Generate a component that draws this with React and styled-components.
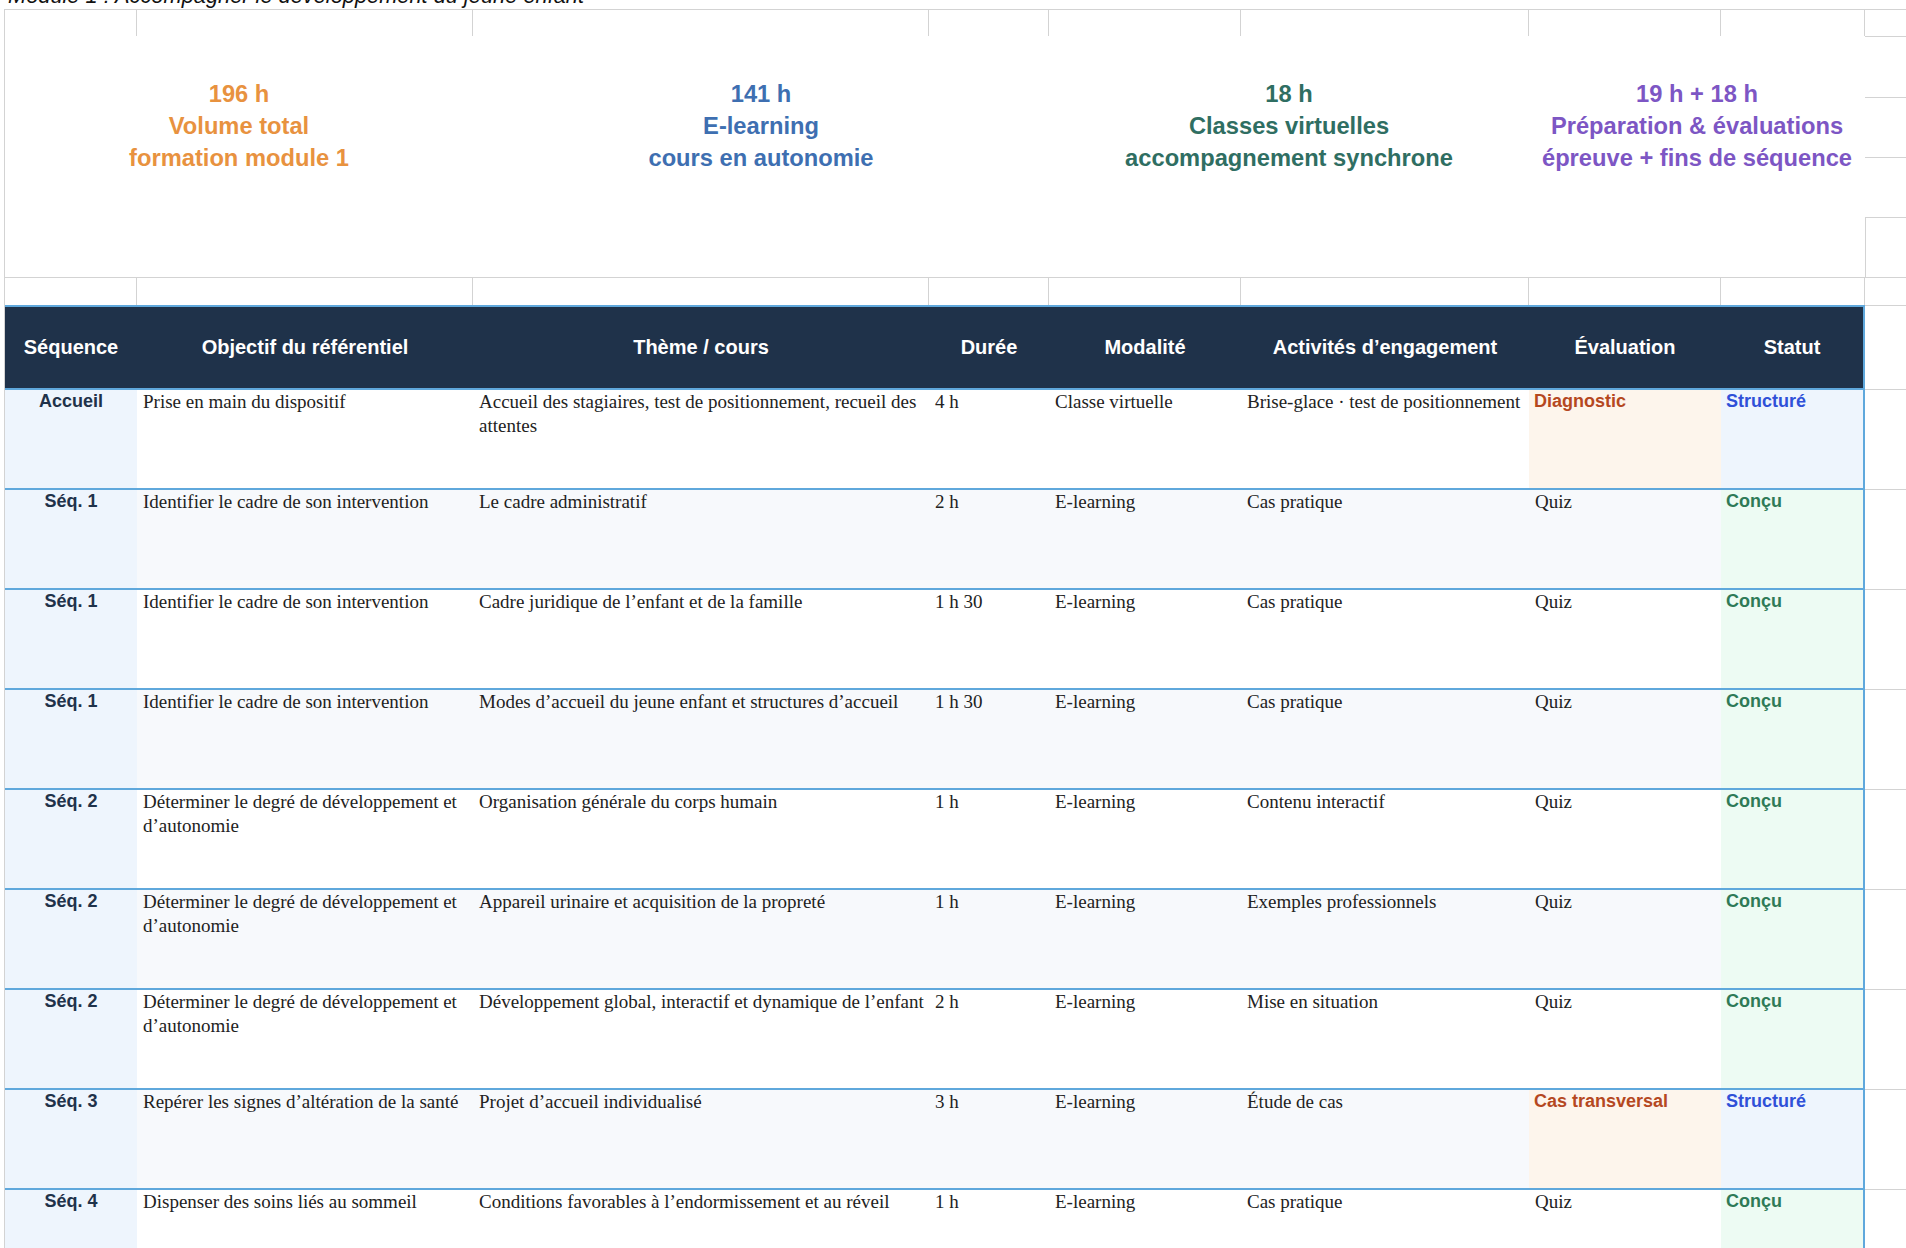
import React from "react";
import styled, { createGlobalStyle } from "styled-components";

const GlobalStyle = createGlobalStyle`
  html, body {
    margin: 0;
    padding: 0;
    background: #fff;
  }
  body {
    overflow: hidden;
  }
`;

const COLS = "132px 336px 456px 120px 192px 288px 192px 144px 1fr";
const GRID = "#d3d3d3";
const LINE = "#5fa8dc";
const NAVY = "#1f324a";

const tones = {
  orange: { bg: "#fdf5ec", fg: "#b5481f" },
  blue: { bg: "#eef5fd", fg: "#2f50d8" },
  green: { bg: "#edfbf3", fg: "#2f7a57" },
};

const Page = styled.div`
  width: 1906px;
  height: 1248px;
  overflow: hidden;
  padding-left: 4px;
  box-sizing: border-box;
  font-family: "Liberation Sans", Arial, sans-serif;
`;

const Title = styled.div`
  margin: -17px 0 0 4px;
  height: 26px;
  line-height: 26px;
  font-size: 21.8px;
  font-style: italic;
  color: #111;
  white-space: nowrap;
`;

const Sheet = styled.div`
  border-left: 1px solid ${GRID};
  border-top: 1px solid ${GRID};
`;

const StubRow = styled.div`
  display: grid;
  grid-template-columns: ${COLS};
  height: ${(p) => p.$h}px;
  box-sizing: border-box;
  border-top: ${(p) => (p.$lined ? `1px solid ${GRID}` : "none")};
`;

const Stub = styled.div`
  border-right: 1px solid ${GRID};
  box-sizing: border-box;
  &:last-child {
    border-right: none;
  }
`;

const SummaryBand = styled.div`
  display: grid;
  grid-template-columns: 468px 576px 480px 336px 1fr;
  height: 241px;
`;

const SummaryCell = styled.div`
  padding-top: 42px;
  text-align: center;
  font-size: 23.7px;
  font-weight: 700;
  line-height: 32px;
  color: ${(p) => p.$color};
`;

const FillerStack = styled.div`
  display: grid;
  grid-template-rows: 61px 60px 60px 60px;
`;

const FillerSlot = styled.div`
  border-top: 1px solid ${GRID};
  border-left: ${(p) => (p.$edge ? `1px solid ${GRID}` : "none")};
`;

const HeaderRow = styled.div`
  display: grid;
  grid-template-columns: ${COLS};
  height: 85px;
`;

const HeadCell = styled.div`
  display: flex;
  align-items: center;
  justify-content: center;
  background: ${NAVY};
  color: #fff;
  font-size: 20px;
  font-weight: 700;
  border-top: 2px solid ${LINE};
  border-bottom: 2px solid ${LINE};
  border-right: ${(p) => (p.$last ? `2px solid ${LINE}` : "none")};
  box-sizing: border-box;
  white-space: nowrap;
`;

const GridFiller = styled.div`
  border-top: ${(p) => (p.$top ? `1px solid ${GRID}` : "none")};
  border-bottom: 1px solid ${GRID};
  box-sizing: border-box;
`;

const DataRow = styled.div`
  display: grid;
  grid-template-columns: ${COLS};
  height: 100px;
`;

const Cell = styled.div`
  box-sizing: border-box;
  padding: 0 0 0 6px;
  background: ${(p) => p.$bg};
  border-bottom: 2px solid ${LINE};
  border-right: ${(p) => (p.$last ? `2px solid ${LINE}` : "none")};
  font-family: "Liberation Serif", "Times New Roman", serif;
  font-size: 19px;
  line-height: 24px;
  color: #222;
`;

const SeqCell = styled(Cell)`
  padding: 0;
  text-align: center;
  font-family: "Liberation Sans", Arial, sans-serif;
  font-weight: 700;
  font-size: 18px;
  line-height: 23px;
  color: ${NAVY};
`;

const TagCell = styled(Cell)`
  padding-left: 5px;
  font-family: "Liberation Sans", Arial, sans-serif;
  font-weight: 700;
  font-size: 18px;
  line-height: 23px;
  color: ${(p) => p.$fg};
`;

const summary = [
  { color: "#e8923f", lines: ["196 h", "Volume total", "formation module 1"] },
  { color: "#3e6fb1", lines: ["141 h", "E-learning", "cours en autonomie"] },
  { color: "#2f6e62", lines: ["18 h", "Classes virtuelles", "accompagnement synchrone"] },
  { color: "#7d56c4", lines: ["19 h + 18 h", "Préparation & évaluations", "épreuve + fins de séquence"] },
];

const headers = [
  "Séquence",
  "Objectif du référentiel",
  "Thème / cours",
  "Durée",
  "Modalité",
  "Activités d’engagement",
  "Évaluation",
  "Statut",
];

const OBJ_CADRE = "Identifier le cadre de son intervention";
const OBJ_DEV = "Déterminer le degré de développement et d’autonomie";

const rows = [
  ["Accueil", "Prise en main du dispositif", "Accueil des stagiaires, test de positionnement, recueil des attentes", "4 h", "Classe virtuelle", "Brise-glace · test de positionnement", "Diagnostic", "Structuré"],
  ["Séq. 1", OBJ_CADRE, "Le cadre administratif", "2 h", "E-learning", "Cas pratique", "Quiz", "Conçu"],
  ["Séq. 1", OBJ_CADRE, "Cadre juridique de l’enfant et de la famille", "1 h 30", "E-learning", "Cas pratique", "Quiz", "Conçu"],
  ["Séq. 1", OBJ_CADRE, "Modes d’accueil du jeune enfant et structures d’accueil", "1 h 30", "E-learning", "Cas pratique", "Quiz", "Conçu"],
  ["Séq. 2", OBJ_DEV, "Organisation générale du corps humain", "1 h", "E-learning", "Contenu interactif", "Quiz", "Conçu"],
  ["Séq. 2", OBJ_DEV, "Appareil urinaire et acquisition de la propreté", "1 h", "E-learning", "Exemples professionnels", "Quiz", "Conçu"],
  ["Séq. 2", OBJ_DEV, "Développement global, interactif et dynamique de l’enfant", "2 h", "E-learning", "Mise en situation", "Quiz", "Conçu"],
  ["Séq. 3", "Repérer les signes d’altération de la santé", "Projet d’accueil individualisé", "3 h", "E-learning", "Étude de cas", "Cas transversal", "Structuré"],
  ["Séq. 4", "Dispenser des soins liés au sommeil", "Conditions favorables à l’endormissement et au réveil", "1 h", "E-learning", "Cas pratique", "Quiz", "Conçu"],
];

const Stubs = ({ h, lined }) => (
  <StubRow $h={h} $lined={lined}>
    {Array.from({ length: 9 }).map((_, i) => (
      <Stub key={i} />
    ))}
  </StubRow>
);

const Row = ({ data, index }) => {
  const [seq, obj, theme, dur, mode, act, evalText, status] = data;
  const bg = index % 2 === 1 ? "#f7f9fc" : "#ffffff";
  const evalTone = evalText === "Quiz" ? null : tones.orange;
  const statusTone = status === "Conçu" ? tones.green : tones.blue;

  return (
    <DataRow>
      <SeqCell $bg="#eef5fd">{seq}</SeqCell>
      <Cell $bg={bg}>{obj}</Cell>
      <Cell $bg={bg}>{theme}</Cell>
      <Cell $bg={bg}>{dur}</Cell>
      <Cell $bg={bg}>{mode}</Cell>
      <Cell $bg={bg}>{act}</Cell>
      {evalTone ? (
        <TagCell $bg={evalTone.bg} $fg={evalTone.fg}>
          {evalText}
        </TagCell>
      ) : (
        <Cell $bg={bg}>{evalText}</Cell>
      )}
      <TagCell $bg={statusTone.bg} $fg={statusTone.fg} $last>
        {status}
      </TagCell>
      <GridFiller />
    </DataRow>
  );
};

const App = () => {
  return (
    <Page>
      <GlobalStyle />
      <Title>Module 1 : Accompagner le développement du jeune enfant</Title>
      <Sheet>
        <Stubs h={26} />
        <SummaryBand>
          {summary.map((s) => (
            <SummaryCell key={s.lines[0]} $color={s.color}>
              {s.lines.map((l) => (
                <div key={l}>{l}</div>
              ))}
            </SummaryCell>
          ))}
          <FillerStack>
            <FillerSlot />
            <FillerSlot />
            <FillerSlot />
            <FillerSlot $edge />
          </FillerStack>
        </SummaryBand>
        <Stubs h={28} lined />
        <HeaderRow>
          {headers.map((h, i) => (
            <HeadCell key={h} $last={i === headers.length - 1}>
              {h}
            </HeadCell>
          ))}
          <GridFiller $top />
        </HeaderRow>
        {rows.map((r, i) => (
          <Row key={i} data={r} index={i} />
        ))}
      </Sheet>
    </Page>
  );
};

export default App;
